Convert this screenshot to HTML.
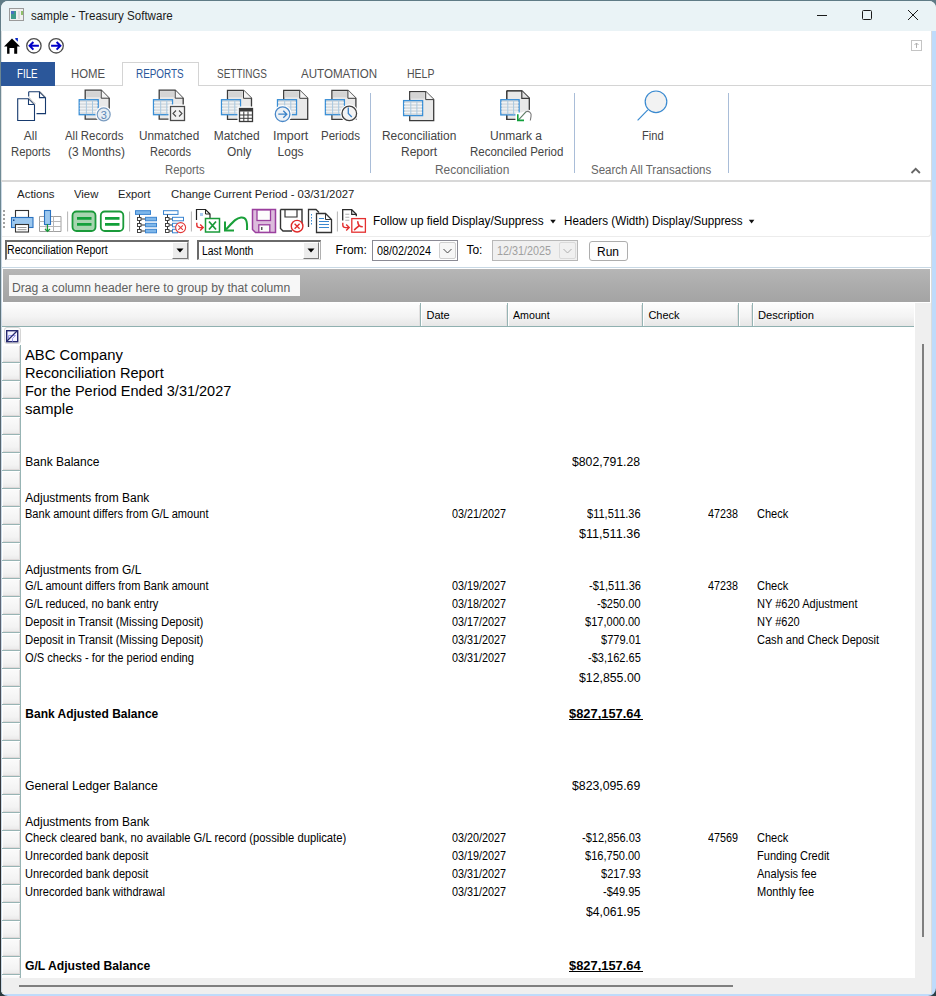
<!DOCTYPE html>
<html><head><meta charset="utf-8">
<style>
*{box-sizing:border-box;margin:0;padding:0}
html,body{width:936px;height:996px;overflow:hidden;background:#fff}
body{position:relative;font-family:"Liberation Sans",sans-serif;color:#000}
.t{position:absolute;white-space:pre;line-height:1;transform-origin:0 0}
.b{position:absolute}
.sel{position:absolute;left:2px;width:19px;height:18px;background:linear-gradient(#fbfbfb,#f3f3f3 70%,#e9e9e9);border-bottom:1px solid #97b4b4;border-right:1px solid #97b4b4;box-shadow:inset 1px 1px 0 #fff,inset -1px -1px 0 #dedada}
svg{position:absolute;overflow:visible}
</style></head><body>
<!-- window frame -->
<div class="b" style="left:0;top:0;width:936px;height:996px;background:#5f7b86"></div>
<div class="b" style="left:1px;top:1px;width:935px;height:995px;background:#fff;border-top-left-radius:7px;border-top-right-radius:7px;overflow:hidden">
</div>
<!-- title bar -->
<div class="b" style="left:1px;top:1px;width:935px;height:30px;background:#eaf3f6;border-top-left-radius:7px;border-top-right-radius:7px"></div>
<!-- right blue strip -->
<div class="b" style="left:931px;top:31px;width:1px;height:963px;background:#d9dcdd"></div>
<div class="b" style="left:932px;top:31px;width:4px;height:965px;background:#bfdbfb"></div>
<div class="b" style="left:0;top:994px;width:936px;height:2px;background:#bfdbfb"></div>
<!-- left dark border -->
<div class="b" style="left:0;top:0;width:1px;height:996px;background:linear-gradient(#5f7a85,#718a95 100px,#6f8a95 180px,#55666e 400px,#5f6878 600px,#2a2a2a 850px,#2a3438)"></div>
<div class="b" style="left:1px;top:31px;width:1px;height:150px;background:#dde2e4"></div>
<div class="b" style="left:1px;top:182px;width:1px;height:812px;background:#cad9e6"></div>

<!-- tabs -->
<div class="b" style="left:1px;top:85px;width:930px;height:1px;background:#d4d4d4"></div>
<div class="b" style="left:1px;top:62px;width:54px;height:24px;background:#2b579a"></div>
<div class="b" style="left:122px;top:62px;width:77px;height:24px;background:#fff;border:1px solid #d4d4d4;border-bottom:none"></div>
<!-- ribbon -->
<div class="b" style="left:1px;top:180px;width:930px;height:2px;background:#d8d8d8"></div>
<div class="b" style="left:370px;top:93px;width:1px;height:80px;background:#a9bdd8"></div>
<div class="b" style="left:574px;top:93px;width:1px;height:80px;background:#a9bdd8"></div>
<div class="b" style="left:728px;top:93px;width:1px;height:80px;background:#a9bdd8"></div>

<div class="b" style="left:2px;top:182px;width:929px;height:55px;border-right:1px solid #ececec;border-bottom:1px solid #ececec;border-bottom-right-radius:3px"></div>
<!-- combo row separator -->
<div class="b" style="left:2px;top:267px;width:929px;height:1px;background:#c8d8e4"></div>
<!-- combos -->
<div class="b" style="left:5px;top:240px;width:184px;height:20px;background:#fff;border-top:2px solid #6a6a6a;border-left:2px solid #6a6a6a;border-bottom:1px solid #e2e2e2;border-right:1px solid #b0b0b0"></div>
<div class="b" style="left:172px;top:242px;width:16px;height:17px;background:#ececec;border-right:1px solid #7a7a7a;border-bottom:1px solid #7a7a7a;border-left:1px solid #fff;border-top:1px solid #fff"></div>
<div class="b" style="left:197px;top:240px;width:124px;height:20px;background:#fff;border-top:2px solid #6a6a6a;border-left:2px solid #6a6a6a;border-bottom:1px solid #e2e2e2;border-right:1px solid #b0b0b0"></div>
<div class="b" style="left:303px;top:242px;width:16px;height:17px;background:#ececec;border-right:1px solid #7a7a7a;border-bottom:1px solid #7a7a7a;border-left:1px solid #fff;border-top:1px solid #fff"></div>
<svg style="left:0;top:0" width="936" height="300">
  <path d="M176.5 248.5h7l-3.5 4z" fill="#000"/>
  <path d="M307.5 248.5h7l-3.5 4z" fill="#000"/>
</svg>
<!-- date pickers -->
<div class="b" style="left:372px;top:240px;width:86px;height:21px;background:#fff;border:1px solid #8a8a94"></div>
<div class="b" style="left:439px;top:242px;width:17px;height:17px;background:#f6f6f6;border:1px solid #cfcfcf;border-radius:2px"></div>
<div class="b" style="left:492px;top:240px;width:86px;height:21px;background:#f0f0f0;border:1px solid #b8b8b8"></div>
<div class="b" style="left:559px;top:242px;width:17px;height:17px;background:#f0f0f0;border:1px solid #dadada;border-radius:2px"></div>
<svg style="left:0;top:0" width="936" height="300">
  <path d="M443.5 249l4 4 4-4" fill="none" stroke="#444" stroke-width="1"/>
  <path d="M563.5 249l4 4 4-4" fill="none" stroke="#b0b0b0" stroke-width="1"/>
</svg>
<div class="b" style="left:589px;top:241px;width:39px;height:20px;background:#fdfdfd;border:1px solid #adadad;border-radius:3px"></div>

<!-- group by area -->
<div class="b" style="left:3px;top:269px;width:927px;height:33px;background:linear-gradient(#b6b6b6,#acacac 50%,#a4a4a4)"></div>
<div class="b" style="left:9px;top:275px;width:291px;height:21px;background:#f7f7f7"></div>

<!-- grid header -->
<div class="b" style="left:2px;top:303px;width:912px;height:24px;background:linear-gradient(#fdfdfd,#f3f3f3 60%,#e6e6e6);border-bottom:1px solid #8fb0b0"></div>
<div class="b" style="left:419px;top:305px;width:1px;height:21px;background:#e2e0e0"></div><div class="b" style="left:420px;top:303px;width:1px;height:23px;background:#96b4b4"></div><div class="b" style="left:421px;top:304px;width:1px;height:22px;background:#ffffff"></div>
<div class="b" style="left:506px;top:305px;width:1px;height:21px;background:#e2e0e0"></div><div class="b" style="left:507px;top:303px;width:1px;height:23px;background:#96b4b4"></div><div class="b" style="left:508px;top:304px;width:1px;height:22px;background:#ffffff"></div>
<div class="b" style="left:641px;top:305px;width:1px;height:21px;background:#e2e0e0"></div><div class="b" style="left:642px;top:303px;width:1px;height:23px;background:#96b4b4"></div><div class="b" style="left:643px;top:304px;width:1px;height:22px;background:#ffffff"></div>
<div class="b" style="left:737px;top:305px;width:1px;height:21px;background:#e2e0e0"></div><div class="b" style="left:738px;top:303px;width:1px;height:23px;background:#96b4b4"></div><div class="b" style="left:739px;top:304px;width:1px;height:22px;background:#ffffff"></div>
<div class="b" style="left:751px;top:305px;width:1px;height:21px;background:#e2e0e0"></div><div class="b" style="left:752px;top:303px;width:1px;height:23px;background:#96b4b4"></div><div class="b" style="left:753px;top:304px;width:1px;height:22px;background:#ffffff"></div>

<!-- row selectors -->
<div class="b" style="left:2px;top:327px;width:19px;height:18px;background:#fff"></div>
<div class="b" style="left:4px;top:327px;width:17px;height:17px;background:linear-gradient(#fdfdfd,#ececec);border:1px solid #d6d6d6;border-radius:3px"></div>
<div class="b" style="left:20px;top:345px;width:1px;height:632px;background:#97b4b4"></div>
<div class="sel" style="top:345px"></div><div class="sel" style="top:363px"></div><div class="sel" style="top:381px"></div><div class="sel" style="top:399px"></div><div class="sel" style="top:417px"></div><div class="sel" style="top:435px"></div><div class="sel" style="top:453px"></div><div class="sel" style="top:471px"></div><div class="sel" style="top:489px"></div><div class="sel" style="top:507px"></div><div class="sel" style="top:525px"></div><div class="sel" style="top:543px"></div><div class="sel" style="top:561px"></div><div class="sel" style="top:579px"></div><div class="sel" style="top:597px"></div><div class="sel" style="top:615px"></div><div class="sel" style="top:633px"></div><div class="sel" style="top:651px"></div><div class="sel" style="top:669px"></div><div class="sel" style="top:687px"></div><div class="sel" style="top:705px"></div><div class="sel" style="top:723px"></div><div class="sel" style="top:741px"></div><div class="sel" style="top:759px"></div><div class="sel" style="top:777px"></div><div class="sel" style="top:795px"></div><div class="sel" style="top:813px"></div><div class="sel" style="top:831px"></div><div class="sel" style="top:849px"></div><div class="sel" style="top:867px"></div><div class="sel" style="top:885px"></div><div class="sel" style="top:903px"></div><div class="sel" style="top:921px"></div><div class="sel" style="top:939px"></div><div class="sel" style="top:957px"></div><div class="sel" style="top:975px"></div>
<svg style="left:0;top:0" width="936" height="996">
  <rect x="6.7" y="330.7" width="11" height="11" fill="#f4f4ff" stroke="#26296e" stroke-width="1.4"/>
  <path d="M8.5 338.5v-3h7l-3 3v3" fill="none" stroke="#9a9cf0" stroke-width="1"/>
  <path d="M6.5 341.5L17.5 330.5" stroke="#26296e" stroke-width="1.3"/>
</svg>

<!-- vertical scrollbar -->
<div class="b" style="left:915px;top:303px;width:16px;height:691px;background:#efefef"></div>
<div class="b" style="left:922px;top:344px;width:2px;height:593px;background:#7f7f7f"></div>
<!-- horizontal scrollbar -->
<div class="b" style="left:2px;top:978px;width:913px;height:16px;background:#efefef;border-bottom-left-radius:3px"></div>
<div class="b" style="left:19px;top:985px;width:714px;height:2px;background:#7f7f7f"></div>


<svg style="left:0;top:0" width="936" height="996"><path d="M0 986V996H8A8 8 0 0 1 0 988Z" fill="#27383c"/><path d="M936 986V996H928A8 8 0 0 0 936 988Z" fill="#2c4046"/></svg>
<svg style="left:0;top:0" width="936" height="996">
<rect x="9.5" y="8.5" width="14" height="12" fill="#f0f0f0" stroke="#9a9a9a" stroke-width="1"/><rect x="11" y="11" width="5" height="8" fill="#3f9a8a"/><rect x="11" y="11" width="3" height="3" fill="#4a70c0"/><rect x="18" y="11" width="2" height="8" fill="#dcdcdc"/><rect x="21" y="11" width="2" height="4" fill="#8fc06a"/>
<path d="M817 15.5h10" stroke="#1a1a1a" stroke-width="1"/><rect x="862.5" y="10.5" width="9" height="9" rx="1" fill="none" stroke="#1a1a1a" stroke-width="1"/><path d="M908 10l10 10M918 10l-10 10" stroke="#1a1a1a" stroke-width="1"/>
<rect x="911.5" y="40.5" width="10" height="10" fill="#fff" stroke="#c4c4c4" stroke-width="1"/><path d="M916.5 48v-5M914.5 45l2-2 2 2" fill="none" stroke="#b0b0b0" stroke-width="1"/>
<path d="M4 46.6L12 38.6L20 46.6H17.2V53.8H14.2V48H9.5V53.8H7.1V46.6Z" fill="#000"/><path d="M15.3 38h2.6v3.8l-2.6-2.6z" fill="#0b2ac8"/>
<circle cx="33.9" cy="45.8" r="7.2" fill="#fff" stroke="#4d4d4d" stroke-width="1.3"/>
<path d="M38.9 45.8H29.9M33.4 42L29.599999999999998 45.8L33.4 49.6" fill="none" stroke="#0000c8" stroke-width="2"/>
<circle cx="56.1" cy="45.8" r="7.2" fill="#fff" stroke="#4d4d4d" stroke-width="1.3"/>
<path d="M51.1 45.8H60.1M56.6 42L60.4 45.8L56.6 49.6" fill="none" stroke="#0000c8" stroke-width="2"/>
<path d="M28.7 91.8h10.8l6 6v15.8h-9" fill="#fff" stroke="#173a6e" stroke-width="1.1"/><path d="M28.7 96.5v-4.7" fill="none" stroke="#173a6e" stroke-width="1.1"/><path d="M39.5 91.8v5.8h6" fill="none" stroke="#173a6e" stroke-width="1.1"/><path d="M17.7 98.7h10.8l6 6v15.8h-16.8z" fill="#fff" stroke="#173a6e" stroke-width="1.1"/><path d="M28.5 98.7v5.8h6" fill="none" stroke="#173a6e" stroke-width="1.1"/><path d="M28.8 97.8l6.8 6.8" stroke="#a0a0a0" stroke-width="1.6" stroke-dasharray="0.6 0.6"/><path d="M39.8 91.5l5.8 6" stroke="#777" stroke-width="0.8"/>
<path d="M85.2 90.2h16l8 8v21h-24z" fill="#e9e9e9" stroke="#3c3c3c" stroke-width="1.3"/><path d="M101.2 90.2v8h8" fill="#f5f5f5" stroke="#3c3c3c" stroke-width="1"/><rect x="86.2" y="91.2" width="14" height="6" fill="#d4d4d4"/>
<rect x="79.2" y="99.7" width="19" height="15" fill="#d9dde0" stroke="#3a8fd6" stroke-width="1.3"/><path d="M79.7 102.7h18" stroke="#f4f8fb" stroke-width="1"/><path d="M79.7 105.7h18" stroke="#f4f8fb" stroke-width="1"/><path d="M79.7 108.7h18" stroke="#f4f8fb" stroke-width="1"/><path d="M79.7 111.7h18" stroke="#f4f8fb" stroke-width="1"/><path d="M86.4 100.2v14" stroke="#a8c8e0" stroke-width="1"/><path d="M92.5 100.2v14" stroke="#a8c8e0" stroke-width="1"/>
<circle cx="103.7" cy="114.4" r="7" fill="#e8eef4" stroke="#fff" stroke-width="2.5"/><circle cx="103.7" cy="114.4" r="6.5" fill="#e8eef4" stroke="#7a9cc0" stroke-width="1.2"/><text x="103.7" y="118.5" font-family="Liberation Sans" font-size="11" fill="#5a86b8" text-anchor="middle">3</text>
<path d="M159.2 90.2h16l8 8v21h-24z" fill="#e9e9e9" stroke="#3c3c3c" stroke-width="1.3"/><path d="M175.2 90.2v8h8" fill="#f5f5f5" stroke="#3c3c3c" stroke-width="1"/><rect x="160.2" y="91.2" width="14" height="6" fill="#d4d4d4"/>
<rect x="153.5" y="99.7" width="19" height="15" fill="#d9dde0" stroke="#3a8fd6" stroke-width="1.3"/><path d="M154 102.7h18" stroke="#f4f8fb" stroke-width="1"/><path d="M154 105.7h18" stroke="#f4f8fb" stroke-width="1"/><path d="M154 108.7h18" stroke="#f4f8fb" stroke-width="1"/><path d="M154 111.7h18" stroke="#f4f8fb" stroke-width="1"/><path d="M160.7 100.2v14" stroke="#a8c8e0" stroke-width="1"/><path d="M166.8 100.2v14" stroke="#a8c8e0" stroke-width="1"/>
<rect x="169.5" y="105.5" width="15" height="15" fill="#f2f2f2" stroke="#fff" stroke-width="2"/><rect x="170.5" y="106.5" width="14" height="14" fill="#f2f2f2" stroke="#4a4a4a" stroke-width="1.3"/><path d="M176 110.5l-3 3 3 3M179 110.5l3 3-3 3" fill="none" stroke="#4a4a4a" stroke-width="1.1"/>
<path d="M227.5 90.3h16l8 8v21h-24z" fill="#e9e9e9" stroke="#3c3c3c" stroke-width="1.3"/><path d="M243.5 90.3v8h8" fill="#f5f5f5" stroke="#3c3c3c" stroke-width="1"/><rect x="228.5" y="91.3" width="14" height="6" fill="#d4d4d4"/>
<rect x="221.5" y="99.7" width="19" height="15" fill="#d9dde0" stroke="#3a8fd6" stroke-width="1.3"/><path d="M222 102.7h18" stroke="#f4f8fb" stroke-width="1"/><path d="M222 105.7h18" stroke="#f4f8fb" stroke-width="1"/><path d="M222 108.7h18" stroke="#f4f8fb" stroke-width="1"/><path d="M222 111.7h18" stroke="#f4f8fb" stroke-width="1"/><path d="M228.7 100.2v14" stroke="#a8c8e0" stroke-width="1"/><path d="M234.8 100.2v14" stroke="#a8c8e0" stroke-width="1"/>
<rect x="238.5" y="107.5" width="14" height="14" fill="#fff" stroke="#fff" stroke-width="2"/><rect x="239.5" y="108.5" width="13" height="13" fill="#fff" stroke="#3a3a3a" stroke-width="1.3"/><rect x="239.5" y="108.5" width="13" height="3" fill="#3a3a3a"/><path d="M240 115h12M240 118.3h12M243.8 111.5v10M248 111.5v10" stroke="#3a3a3a" stroke-width="1"/>
<path d="M283.7 90.3h16l8 8v21h-24z" fill="#e9e9e9" stroke="#3c3c3c" stroke-width="1.3"/><path d="M299.7 90.3v8h8" fill="#f5f5f5" stroke="#3c3c3c" stroke-width="1"/><rect x="284.7" y="91.3" width="14" height="6" fill="#d4d4d4"/>
<rect x="277.5" y="99.7" width="19" height="15" fill="#d9dde0" stroke="#3a8fd6" stroke-width="1.3"/><path d="M278 102.7h18" stroke="#f4f8fb" stroke-width="1"/><path d="M278 105.7h18" stroke="#f4f8fb" stroke-width="1"/><path d="M278 108.7h18" stroke="#f4f8fb" stroke-width="1"/><path d="M278 111.7h18" stroke="#f4f8fb" stroke-width="1"/><path d="M284.7 100.2v14" stroke="#a8c8e0" stroke-width="1"/><path d="M290.8 100.2v14" stroke="#a8c8e0" stroke-width="1"/>
<circle cx="282.6" cy="114.2" r="8" fill="#eef2f6" stroke="#fff" stroke-width="2.5"/><circle cx="282.6" cy="114.2" r="7.3" fill="#eef2f6" stroke="#4a88c8" stroke-width="1.3"/><path d="M278.3 114.2h8M283.3 110.7l3.5 3.5-3.5 3.5" fill="none" stroke="#3a82c8" stroke-width="1.3"/>
<path d="M331.9 90.3h16l8 8v21h-24z" fill="#e9e9e9" stroke="#3c3c3c" stroke-width="1.3"/><path d="M347.9 90.3v8h8" fill="#f5f5f5" stroke="#3c3c3c" stroke-width="1"/><rect x="332.9" y="91.3" width="14" height="6" fill="#d4d4d4"/>
<rect x="325.4" y="99.7" width="19" height="15" fill="#d9dde0" stroke="#3a8fd6" stroke-width="1.3"/><path d="M325.9 102.7h18" stroke="#f4f8fb" stroke-width="1"/><path d="M325.9 105.7h18" stroke="#f4f8fb" stroke-width="1"/><path d="M325.9 108.7h18" stroke="#f4f8fb" stroke-width="1"/><path d="M325.9 111.7h18" stroke="#f4f8fb" stroke-width="1"/><path d="M332.6 100.2v14" stroke="#a8c8e0" stroke-width="1"/><path d="M338.7 100.2v14" stroke="#a8c8e0" stroke-width="1"/>
<circle cx="349.3" cy="113.4" r="7.8" fill="#f4f4f4" stroke="#fff" stroke-width="2.5"/><circle cx="349.3" cy="113.4" r="7.3" fill="#f4f4f4" stroke="#404040" stroke-width="1.3"/><path d="M348.3 107.5v6l3.5 3.5" fill="none" stroke="#3a82c8" stroke-width="1.3"/>
<path d="M409.7 91.6h16l8 8v21h-24z" fill="#e9e9e9" stroke="#3c3c3c" stroke-width="1.3"/><path d="M425.7 91.6v8h8" fill="#f5f5f5" stroke="#3c3c3c" stroke-width="1"/><rect x="410.7" y="92.6" width="14" height="6" fill="#d4d4d4"/>
<rect x="403.6" y="100.6" width="19" height="15" fill="#d9dde0" stroke="#3a8fd6" stroke-width="1.3"/><path d="M404.1 103.6h18" stroke="#f4f8fb" stroke-width="1"/><path d="M404.1 106.6h18" stroke="#f4f8fb" stroke-width="1"/><path d="M404.1 109.6h18" stroke="#f4f8fb" stroke-width="1"/><path d="M404.1 112.6h18" stroke="#f4f8fb" stroke-width="1"/><path d="M410.8 101.1v14" stroke="#a8c8e0" stroke-width="1"/><path d="M416.9 101.1v14" stroke="#a8c8e0" stroke-width="1"/>
<path d="M506.8 90.8h15l7.5 7.5v11.5" fill="#e8e8e8" stroke="#3c3c3c" stroke-width="1.3"/><path d="M506.8 90.8v28.5h9" fill="none" stroke="#3c3c3c" stroke-width="1.3"/><path d="M507.5 91.5h14.3l7.3 7.3v20.5h-21.6z" fill="#e8e8e8"/><path d="M506.8 90.8h15l7.5 7.5v11.5" fill="none" stroke="#3c3c3c" stroke-width="1.3"/><path d="M506.8 90.8v28.5h9" fill="none" stroke="#3c3c3c" stroke-width="1.3"/><path d="M521.8 91v7.3h7.3" fill="#e4e4e4" stroke="#3c3c3c" stroke-width="1.2"/>
<rect x="500.8" y="99.7" width="18.3" height="15.2" fill="#d9dde0" stroke="#3a8fd6" stroke-width="1.3"/><path d="M501.3 102.7h17.3" stroke="#f4f8fb" stroke-width="1"/><path d="M501.3 105.8h17.3" stroke="#f4f8fb" stroke-width="1"/><path d="M501.3 108.8h17.3" stroke="#f4f8fb" stroke-width="1"/><path d="M501.3 111.9h17.3" stroke="#f4f8fb" stroke-width="1"/><path d="M507.8 100.2v14.2" stroke="#a8c8e0" stroke-width="1"/><path d="M513.6 100.2v14.2" stroke="#a8c8e0" stroke-width="1"/>
<path d="M515.5 112.5h6l4 -1.5 5 1v9.5h-15z" fill="#fff"/><path d="M518.5 119.8L526 111.8C529 110.5 532 113 531 116.5L530.3 120.5" fill="none" stroke="#777" stroke-width="1.1"/><path d="M518.5 119.8L526 111.8" fill="none" stroke="#4a9a5a" stroke-width="1" stroke-dasharray="1 1"/><path d="M517.8 114.2v6.2h6.2" fill="none" stroke="#10a03a" stroke-width="1.6"/>
<circle cx="656" cy="101.8" r="10.8" fill="#f2f2f2" stroke="#3a8ad0" stroke-width="1.2"/><path d="M647.8 109.8L637.6 120.3" stroke="#3a8ad0" stroke-width="1.2"/>
<path d="M911.5 173l4.2-4.2 4.2 4.2" fill="none" stroke="#666" stroke-width="1.8"/>
<rect x="3" y="210.2" width="2" height="1.6" fill="#8c8c8c"/>
<rect x="3" y="214.2" width="2" height="1.6" fill="#8c8c8c"/>
<rect x="3" y="218.2" width="2" height="1.6" fill="#8c8c8c"/>
<rect x="3" y="222.2" width="2" height="1.6" fill="#8c8c8c"/>
<rect x="3" y="226.2" width="2" height="1.6" fill="#8c8c8c"/>
<path d="M67.6 211.5v20" stroke="#b4b4b4" stroke-width="1"/>
<path d="M129.6 211.5v20" stroke="#b4b4b4" stroke-width="1"/>
<path d="M191.4 211.5v20" stroke="#b4b4b4" stroke-width="1"/>
<path d="M337.4 211.5v20" stroke="#b4b4b4" stroke-width="1"/>
<rect x="15.5" y="210.5" width="13" height="7" fill="#fff" stroke="#333" stroke-width="1.1"/><rect x="11.5" y="217.5" width="21.5" height="10" fill="#9cc8ef" stroke="#2a72c0" stroke-width="1.1"/><rect x="13" y="219.5" width="1.5" height="1.5" fill="#1a4a90"/><rect x="15.5" y="224.5" width="13" height="7.5" fill="#fff" stroke="#333" stroke-width="1.1"/><path d="M17.5 227.5h9M17.5 229.7h9" stroke="#999" stroke-width="1"/>
<path d="M39.5 216.5h21.5v15h-21.5z" fill="#fff" stroke="#a0a0a0" stroke-width="1"/><path d="M39.5 221.5h21.5M39.5 226.5h21.5M46 216.5v15M53.5 216.5v15" stroke="#b8b8b8" stroke-width="1"/><rect x="44.5" y="210.5" width="6" height="14" fill="#9cc8ef" stroke="#2a72c0" stroke-width="1.1"/><path d="M47.5 224v7.5M45 229l2.5 2.5 2.5-2.5" fill="none" stroke="#1a9a3a" stroke-width="1.2"/>
<rect x="72.5" y="211.5" width="23" height="19.5" rx="4" fill="#a8d5b0" stroke="#1a9a3a" stroke-width="1.8"/><path d="M77 218.4h14.5M77 224.4h14.5" stroke="#12a03a" stroke-width="2.8"/>
<rect x="100.8" y="211.5" width="22.5" height="19.5" rx="4" fill="#fff" stroke="#1a9a3a" stroke-width="1.8"/><path d="M105 218.4h14.5M105 224.4h14.5" stroke="#12a03a" stroke-width="2.8"/>
<rect x="135.5" y="210.7" width="15" height="3.7" fill="#7fb7ea" stroke="#3a84d0" stroke-width="1"/><path d="M139.5 214.5v15.5M140 219h5M140 225h5M140 231h5" stroke="#333" stroke-width="1"/><rect x="137.5" y="217.5" width="3.5" height="3" fill="#fff" stroke="#333" stroke-width="0.9"/><rect x="137.5" y="223.5" width="3.5" height="3" fill="#fff" stroke="#333" stroke-width="0.9"/><rect x="137.5" y="229.5" width="3.5" height="3" fill="#fff" stroke="#333" stroke-width="0.9"/><rect x="145.5" y="217.3" width="11" height="3.5" fill="#7fb7ea" stroke="#3a84d0" stroke-width="1"/><rect x="145.5" y="223.3" width="11" height="3.5" fill="#7fb7ea" stroke="#3a84d0" stroke-width="1"/><rect x="145.5" y="229.3" width="11" height="3.5" fill="#7fb7ea" stroke="#3a84d0" stroke-width="1"/>
<rect x="163.5" y="210.7" width="14.5" height="3.7" fill="#fff" stroke="#3a84d0" stroke-width="1"/><path d="M167.5 214.5v15.5M168 219h5M168 225h5M168 231h5" stroke="#333" stroke-width="1"/><rect x="165.5" y="217.5" width="3.5" height="3" fill="#fff" stroke="#333" stroke-width="0.9"/><rect x="165.5" y="223.5" width="3.5" height="3" fill="#fff" stroke="#333" stroke-width="0.9"/><rect x="165.5" y="229.5" width="3.5" height="3" fill="#fff" stroke="#333" stroke-width="0.9"/><rect x="172.5" y="217.3" width="11" height="3.5" fill="#fff" stroke="#3a84d0" stroke-width="1"/><rect x="172.5" y="223.3" width="5" height="3.5" fill="#fff" stroke="#3a84d0" stroke-width="1"/><rect x="172.5" y="229.3" width="5" height="3.5" fill="#fff" stroke="#3a84d0" stroke-width="1"/><circle cx="180.6" cy="227.6" r="5" fill="#fff" stroke="#e23a3a" stroke-width="1.1"/><path d="M178.3 225.3l4.6 4.6M182.9 225.3l-4.6 4.6" stroke="#e23a3a" stroke-width="1.1"/>
<path d="M196.5 220v-10.5h9l4.5 4.5v4" fill="#fff" stroke="#222" stroke-width="1.2"/><path d="M205.5 209.5v4.5h4.5" fill="none" stroke="#222" stroke-width="1"/><rect x="200" y="213" width="3" height="3" fill="#a8c8f0"/><path d="M196.8 222.7v2.3c0 2 1.2 2.6 3 2.6h3.2M200.2 224.5l3 3-3 3" fill="none" stroke="#e43030" stroke-width="1.4"/><rect x="205.5" y="218.5" width="14" height="13.5" fill="#fff" stroke="#1a9a3a" stroke-width="1.5"/><path d="M209 221.5l7 8M216 221.5l-7 8" stroke="#1a9a3a" stroke-width="1.8"/>
<path d="M226 229.5C233 222 236 218 241 217.5C246 217 247.5 221 247 230" fill="none" stroke="#1aa03a" stroke-width="2"/><path d="M225 221.5v9h9" fill="none" stroke="#1aa03a" stroke-width="2"/>
<path d="M252.5 209.5h23v23h-20l-3-3z" fill="#dcbcdc" stroke="#9a3f9e" stroke-width="1.5"/><rect x="257" y="210" width="13.5" height="10.5" fill="#fcfcfc" stroke="#9a3f9e" stroke-width="1.3"/><rect x="258.8" y="224.8" width="11" height="7.5" fill="#fcfcfc" stroke="#9a3f9e" stroke-width="1.3"/><rect x="261" y="227" width="1.5" height="3" fill="#555"/>
<path d="M280.5 209.5h21.5v14M292 231h-9l-2.5-2.5v-19" fill="none" stroke="#333" stroke-width="1.4"/><path d="M285 210v7h12v-7" fill="none" stroke="#333" stroke-width="1.2"/><circle cx="297.1" cy="226.2" r="5.8" fill="#fff" stroke="#e02a2a" stroke-width="1.4"/><path d="M294.6 223.7l5 5M299.6 223.7l-5 5" stroke="#e02a2a" stroke-width="1.3"/>
<path d="M308.5 227v-17.5h7.5l3 3" fill="none" stroke="#333" stroke-width="1.3"/><path d="M311.5 214v1.5M311.5 217v1.5M311.5 220v1.5M311.5 223v1.5" stroke="#3a88d0" stroke-width="1"/><path d="M316.5 213.5h9l6 6v13h-15z" fill="#fff" stroke="#333" stroke-width="1.3"/><path d="M325.5 213.5v6h6" fill="none" stroke="#333" stroke-width="1"/><path d="M319 218.5h5M319 221.5h10M319 224.5h10M319 227.5h10" stroke="#3a88d0" stroke-width="1.2"/>
<path d="M342.7 220.5v-10.8h9l4.6 4.6v2" fill="none" stroke="#2a2a2a" stroke-width="1.3"/><path d="M351.7 209.7v4.6h4.6" fill="none" stroke="#2a2a2a" stroke-width="1.2"/><path d="M345.3 214.2h4M345.3 217.2h4M345.3 220.2h4" stroke="#b0b0b0" stroke-width="1.1"/><path d="M342.8 222.7v2.3c0 2 1.2 2.6 3 2.6h3.2M346.2 224.5l3 3-3 3" fill="none" stroke="#e43030" stroke-width="1.4"/><rect x="351.8" y="218.6" width="13.6" height="13.6" fill="#fff" stroke="#e43030" stroke-width="1.3"/><path d="M357.8 221.8c0 1.5 .5 2.8 1.4 3.8M359.2 225.6c1 .8 2 1.1 3 1.1M359.2 225.6c-1.5 1.3-3 2.5-4.6 4" fill="none" stroke="#e43030" stroke-width="1.6" stroke-linecap="round"/>
<path d="M550.2 219.8h5.6l-2.8 3.6z" fill="#111"/><path d="M748.8 219.8h5.6l-2.8 3.6z" fill="#111"/>
</svg>
<div class="t" style="left:31.25px;top:9.84px;font-size:12px;font-weight:400;color:#1b1b1b;transform:scaleX(0.9661);">sample - Treasury Software</div>
<div class="t" style="left:17.40px;top:68.44px;font-size:12px;font-weight:400;color:#ffffff;transform:scaleX(0.8128);">FILE</div>
<div class="t" style="left:70.50px;top:68.44px;font-size:12px;font-weight:400;color:#505050;transform:scaleX(0.9472);">HOME</div>
<div class="t" style="left:136.40px;top:68.44px;font-size:12px;font-weight:400;color:#2b579a;transform:scaleX(0.8253);">REPORTS</div>
<div class="t" style="left:217.40px;top:68.44px;font-size:12px;font-weight:400;color:#505050;transform:scaleX(0.8315);">SETTINGS</div>
<div class="t" style="left:300.50px;top:68.44px;font-size:12px;font-weight:400;color:#505050;transform:scaleX(0.9646);">AUTOMATION</div>
<div class="t" style="left:407.20px;top:68.44px;font-size:12px;font-weight:400;color:#505050;transform:scaleX(0.8737);">HELP</div>
<div class="t" style="left:23.83px;top:129.64px;font-size:12px;font-weight:400;color:#444444;">All</div>
<div class="t" style="left:11.30px;top:145.64px;font-size:12px;font-weight:400;color:#444444;transform:scaleX(0.9398);">Reports</div>
<div class="t" style="left:65.40px;top:129.64px;font-size:12px;font-weight:400;color:#444444;transform:scaleX(0.9518);">All Records</div>
<div class="t" style="left:68.00px;top:145.64px;font-size:12px;font-weight:400;color:#444444;transform:scaleX(0.9920);">(3 Months)</div>
<div class="t" style="left:138.50px;top:129.64px;font-size:12px;font-weight:400;color:#444444;transform:scaleX(0.9809);">Unmatched</div>
<div class="t" style="left:150.00px;top:145.64px;font-size:12px;font-weight:400;color:#444444;transform:scaleX(0.9175);">Records</div>
<div class="t" style="left:213.70px;top:129.64px;font-size:12px;font-weight:400;color:#444444;">Matched</div>
<div class="t" style="left:226.60px;top:145.64px;font-size:12px;font-weight:400;color:#444444;transform:scaleX(0.9924);">Only</div>
<div class="t" style="left:273.00px;top:129.64px;font-size:12px;font-weight:400;color:#444444;transform:scaleX(1.0378);">Import</div>
<div class="t" style="left:277.58px;top:145.64px;font-size:12px;font-weight:400;color:#444444;">Logs</div>
<div class="t" style="left:321.20px;top:129.64px;font-size:12px;font-weight:400;color:#444444;transform:scaleX(0.9585);">Periods</div>
<div class="t" style="left:382.30px;top:129.64px;font-size:12px;font-weight:400;color:#444444;transform:scaleX(0.9944);">Reconciliation</div>
<div class="t" style="left:400.98px;top:145.64px;font-size:12px;font-weight:400;color:#444444;">Report</div>
<div class="t" style="left:489.99px;top:129.64px;font-size:12px;font-weight:400;color:#444444;">Unmark a</div>
<div class="t" style="left:469.60px;top:145.64px;font-size:12px;font-weight:400;color:#444444;transform:scaleX(0.9590);">Reconciled Period</div>
<div class="t" style="left:641.70px;top:129.64px;font-size:12px;font-weight:400;color:#444444;transform:scaleX(0.9296);">Find</div>
<div class="t" style="left:165.40px;top:164.04px;font-size:12px;font-weight:400;color:#666666;transform:scaleX(0.9445);">Reports</div>
<div class="t" style="left:435.10px;top:164.04px;font-size:12px;font-weight:400;color:#666666;transform:scaleX(0.9944);">Reconciliation</div>
<div class="t" style="left:591.40px;top:164.04px;font-size:12px;font-weight:400;color:#666666;transform:scaleX(0.9585);">Search All Transactions</div>
<div class="t" style="left:17.00px;top:189.02px;font-size:11.2px;font-weight:400;color:#1e1e1e;transform:scaleX(1.0249);">Actions</div>
<div class="t" style="left:74.40px;top:189.02px;font-size:11.2px;font-weight:400;color:#1e1e1e;transform:scaleX(1.0105);">View</div>
<div class="t" style="left:118.00px;top:189.02px;font-size:11.2px;font-weight:400;color:#1e1e1e;transform:scaleX(1.0048);">Export</div>
<div class="t" style="left:170.50px;top:189.02px;font-size:11.2px;font-weight:400;color:#1e1e1e;transform:scaleX(1.0128);">Change Current Period - 03/31/2027</div>
<div class="t" style="left:373.20px;top:214.54px;font-size:12px;font-weight:400;color:#000;transform:scaleX(0.9837);">Follow up field Display/Suppress</div>
<div class="t" style="left:563.80px;top:214.54px;font-size:12px;font-weight:400;color:#000;transform:scaleX(0.9708);">Headers (Width) Display/Suppress</div>
<div class="t" style="left:7.00px;top:243.64px;font-size:12px;font-weight:400;color:#000;transform:scaleX(0.8828);">Reconciliation Report</div>
<div class="t" style="left:201.50px;top:244.94px;font-size:12px;font-weight:400;color:#000;transform:scaleX(0.8640);">Last Month</div>
<div class="t" style="left:335.60px;top:243.84px;font-size:12px;font-weight:400;color:#000;">From:</div>
<div class="t" style="left:377.40px;top:244.84px;font-size:12px;font-weight:400;color:#000;transform:scaleX(0.8991);">08/02/2024</div>
<div class="t" style="left:466.40px;top:243.84px;font-size:12px;font-weight:400;color:#000;">To:</div>
<div class="t" style="left:496.50px;top:244.84px;font-size:12px;font-weight:400;color:#a0a0a0;transform:scaleX(0.8991);">12/31/2025</div>
<div class="t" style="left:596.99px;top:245.84px;font-size:12px;font-weight:400;color:#000;">Run</div>
<div class="t" style="left:11.80px;top:281.64px;font-size:12px;font-weight:400;color:#5e5e5e;transform:scaleX(1.0123);">Drag a column header here to group by that column</div>
<div class="t" style="left:426.50px;top:309.89px;font-size:11px;font-weight:400;color:#000;">Date</div>
<div class="t" style="left:513.30px;top:309.89px;font-size:11px;font-weight:400;color:#000;transform:scaleX(0.9678);">Amount</div>
<div class="t" style="left:648.40px;top:309.89px;font-size:11px;font-weight:400;color:#000;">Check</div>
<div class="t" style="left:757.80px;top:309.89px;font-size:11px;font-weight:400;color:#000;transform:scaleX(1.0158);">Description</div>
<div class="t" style="left:25.20px;top:347.88px;font-size:14.67px;font-weight:400;color:#000;transform:scaleX(1.0089);">ABC Company</div>
<div class="t" style="left:25.20px;top:365.88px;font-size:14.67px;font-weight:400;color:#000;transform:scaleX(0.9956);">Reconciliation Report</div>
<div class="t" style="left:25.20px;top:383.88px;font-size:14.67px;font-weight:400;color:#000;transform:scaleX(0.9889);">For the Period Ended 3/31/2027</div>
<div class="t" style="left:25.20px;top:401.88px;font-size:14.67px;font-weight:400;color:#000;transform:scaleX(1.0265);">sample</div>
<div class="t" style="left:25.30px;top:455.64px;font-size:12px;font-weight:400;color:#000;">Bank Balance</div>
<div class="t" style="left:572.43px;top:455.64px;font-size:12px;font-weight:400;color:#000;transform:scaleX(1.0200);">$802,791.28</div>
<div class="t" style="left:25.30px;top:491.64px;font-size:12px;font-weight:400;color:#000;">Adjustments from Bank</div>
<div class="t" style="left:25.30px;top:507.84px;font-size:12px;font-weight:400;color:#000;transform:scaleX(0.9200);">Bank amount differs from G/L amount</div>
<div class="t" style="left:451.94px;top:507.84px;font-size:12px;font-weight:400;color:#000;transform:scaleX(0.9000);">03/21/2027</div>
<div class="t" style="left:586.88px;top:507.84px;font-size:12px;font-weight:400;color:#000;transform:scaleX(0.9200);">$11,511.36</div>
<div class="t" style="left:708.10px;top:507.84px;font-size:12px;font-weight:400;color:#000;transform:scaleX(0.8960);">47238</div>
<div class="t" style="left:756.70px;top:507.84px;font-size:12px;font-weight:400;color:#000;transform:scaleX(0.9200);">Check</div>
<div class="t" style="left:579.30px;top:527.64px;font-size:12px;font-weight:400;color:#000;transform:scaleX(1.0500);">$11,511.36</div>
<div class="t" style="left:25.30px;top:563.64px;font-size:12px;font-weight:400;color:#000;">Adjustments from G/L</div>
<div class="t" style="left:25.30px;top:579.84px;font-size:12px;font-weight:400;color:#000;transform:scaleX(0.9200);">G/L amount differs from Bank amount</div>
<div class="t" style="left:451.94px;top:579.84px;font-size:12px;font-weight:400;color:#000;transform:scaleX(0.9000);">03/19/2027</div>
<div class="t" style="left:588.52px;top:579.84px;font-size:12px;font-weight:400;color:#000;transform:scaleX(0.9200);">-$1,511.36</div>
<div class="t" style="left:708.10px;top:579.84px;font-size:12px;font-weight:400;color:#000;transform:scaleX(0.8960);">47238</div>
<div class="t" style="left:756.70px;top:579.84px;font-size:12px;font-weight:400;color:#000;transform:scaleX(0.9200);">Check</div>
<div class="t" style="left:25.30px;top:597.84px;font-size:12px;font-weight:400;color:#000;transform:scaleX(0.9200);">G/L reduced, no bank entry</div>
<div class="t" style="left:451.94px;top:597.84px;font-size:12px;font-weight:400;color:#000;transform:scaleX(0.9000);">03/18/2027</div>
<div class="t" style="left:596.91px;top:597.84px;font-size:12px;font-weight:400;color:#000;transform:scaleX(0.9200);">-$250.00</div>
<div class="t" style="left:756.70px;top:597.84px;font-size:12px;font-weight:400;color:#000;transform:scaleX(0.9200);">NY #620 Adjustment</div>
<div class="t" style="left:25.30px;top:615.84px;font-size:12px;font-weight:400;color:#000;transform:scaleX(0.9450);">Deposit in Transit (Missing Deposit)</div>
<div class="t" style="left:451.94px;top:615.84px;font-size:12px;font-weight:400;color:#000;transform:scaleX(0.9000);">03/17/2027</div>
<div class="t" style="left:585.24px;top:615.84px;font-size:12px;font-weight:400;color:#000;transform:scaleX(0.9200);">$17,000.00</div>
<div class="t" style="left:756.70px;top:615.84px;font-size:12px;font-weight:400;color:#000;transform:scaleX(0.9200);">NY #620</div>
<div class="t" style="left:25.30px;top:633.84px;font-size:12px;font-weight:400;color:#000;transform:scaleX(0.9450);">Deposit in Transit (Missing Deposit)</div>
<div class="t" style="left:451.94px;top:633.84px;font-size:12px;font-weight:400;color:#000;transform:scaleX(0.9000);">03/31/2027</div>
<div class="t" style="left:600.58px;top:633.84px;font-size:12px;font-weight:400;color:#000;transform:scaleX(0.9200);">$779.01</div>
<div class="t" style="left:756.70px;top:633.84px;font-size:12px;font-weight:400;color:#000;transform:scaleX(0.9200);">Cash and Check Deposit</div>
<div class="t" style="left:25.30px;top:651.84px;font-size:12px;font-weight:400;color:#000;transform:scaleX(0.9280);">O/S checks - for the period ending</div>
<div class="t" style="left:451.94px;top:651.84px;font-size:12px;font-weight:400;color:#000;transform:scaleX(0.9000);">03/31/2027</div>
<div class="t" style="left:587.70px;top:651.84px;font-size:12px;font-weight:400;color:#000;transform:scaleX(0.9200);">-$3,162.65</div>
<div class="t" style="left:25.30px;top:831.84px;font-size:12px;font-weight:400;color:#000;transform:scaleX(0.9360);">Check cleared bank, no available G/L record (possible duplicate)</div>
<div class="t" style="left:451.94px;top:831.84px;font-size:12px;font-weight:400;color:#000;transform:scaleX(0.9000);">03/20/2027</div>
<div class="t" style="left:581.56px;top:831.84px;font-size:12px;font-weight:400;color:#000;transform:scaleX(0.9200);">-$12,856.03</div>
<div class="t" style="left:708.10px;top:831.84px;font-size:12px;font-weight:400;color:#000;transform:scaleX(0.8960);">47569</div>
<div class="t" style="left:756.70px;top:831.84px;font-size:12px;font-weight:400;color:#000;transform:scaleX(0.9200);">Check</div>
<div class="t" style="left:25.30px;top:849.84px;font-size:12px;font-weight:400;color:#000;transform:scaleX(0.9200);">Unrecorded bank deposit</div>
<div class="t" style="left:451.94px;top:849.84px;font-size:12px;font-weight:400;color:#000;transform:scaleX(0.9000);">03/19/2027</div>
<div class="t" style="left:585.24px;top:849.84px;font-size:12px;font-weight:400;color:#000;transform:scaleX(0.9200);">$16,750.00</div>
<div class="t" style="left:756.70px;top:849.84px;font-size:12px;font-weight:400;color:#000;transform:scaleX(0.9200);">Funding Credit</div>
<div class="t" style="left:25.30px;top:867.84px;font-size:12px;font-weight:400;color:#000;transform:scaleX(0.9200);">Unrecorded bank deposit</div>
<div class="t" style="left:451.94px;top:867.84px;font-size:12px;font-weight:400;color:#000;transform:scaleX(0.9000);">03/31/2027</div>
<div class="t" style="left:600.58px;top:867.84px;font-size:12px;font-weight:400;color:#000;transform:scaleX(0.9200);">$217.93</div>
<div class="t" style="left:756.70px;top:867.84px;font-size:12px;font-weight:400;color:#000;transform:scaleX(0.9200);">Analysis fee</div>
<div class="t" style="left:25.30px;top:885.84px;font-size:12px;font-weight:400;color:#000;transform:scaleX(0.9200);">Unrecorded bank withdrawal</div>
<div class="t" style="left:451.94px;top:885.84px;font-size:12px;font-weight:400;color:#000;transform:scaleX(0.9000);">03/31/2027</div>
<div class="t" style="left:603.05px;top:885.84px;font-size:12px;font-weight:400;color:#000;transform:scaleX(0.9200);">-$49.95</div>
<div class="t" style="left:756.70px;top:885.84px;font-size:12px;font-weight:400;color:#000;transform:scaleX(0.9200);">Monthly fee</div>
<div class="t" style="left:578.94px;top:671.64px;font-size:12px;font-weight:400;color:#000;transform:scaleX(1.0250);">$12,855.00</div>
<div class="t" style="left:25.30px;top:707.64px;font-size:12px;font-weight:700;color:#000;">Bank Adjusted Balance</div>
<div class="t" style="left:568.89px;top:707.64px;font-size:12px;font-weight:700;color:#000;transform:scaleX(1.0730);">$827,157.64</div>
<div class="t" style="left:25.30px;top:779.64px;font-size:12px;font-weight:400;color:#000;transform:scaleX(1.0200);">General Ledger Balance</div>
<div class="t" style="left:572.30px;top:779.64px;font-size:12px;font-weight:400;color:#000;transform:scaleX(1.0220);">$823,095.69</div>
<div class="t" style="left:25.30px;top:815.64px;font-size:12px;font-weight:400;color:#000;">Adjustments from Bank</div>
<div class="t" style="left:586.31px;top:905.64px;font-size:12px;font-weight:400;color:#000;transform:scaleX(1.0150);">$4,061.95</div>
<div class="t" style="left:25.30px;top:959.64px;font-size:12px;font-weight:700;color:#000;transform:scaleX(1.0148);">G/L Adjusted Balance</div>
<div class="t" style="left:568.89px;top:959.64px;font-size:12px;font-weight:700;color:#000;transform:scaleX(1.0730);">$827,157.64</div>
<div class="b" style="left:569px;top:719px;width:74px;height:1px;background:#000"></div>
<div class="b" style="left:569px;top:971px;width:74px;height:1px;background:#000"></div>
</body></html>
